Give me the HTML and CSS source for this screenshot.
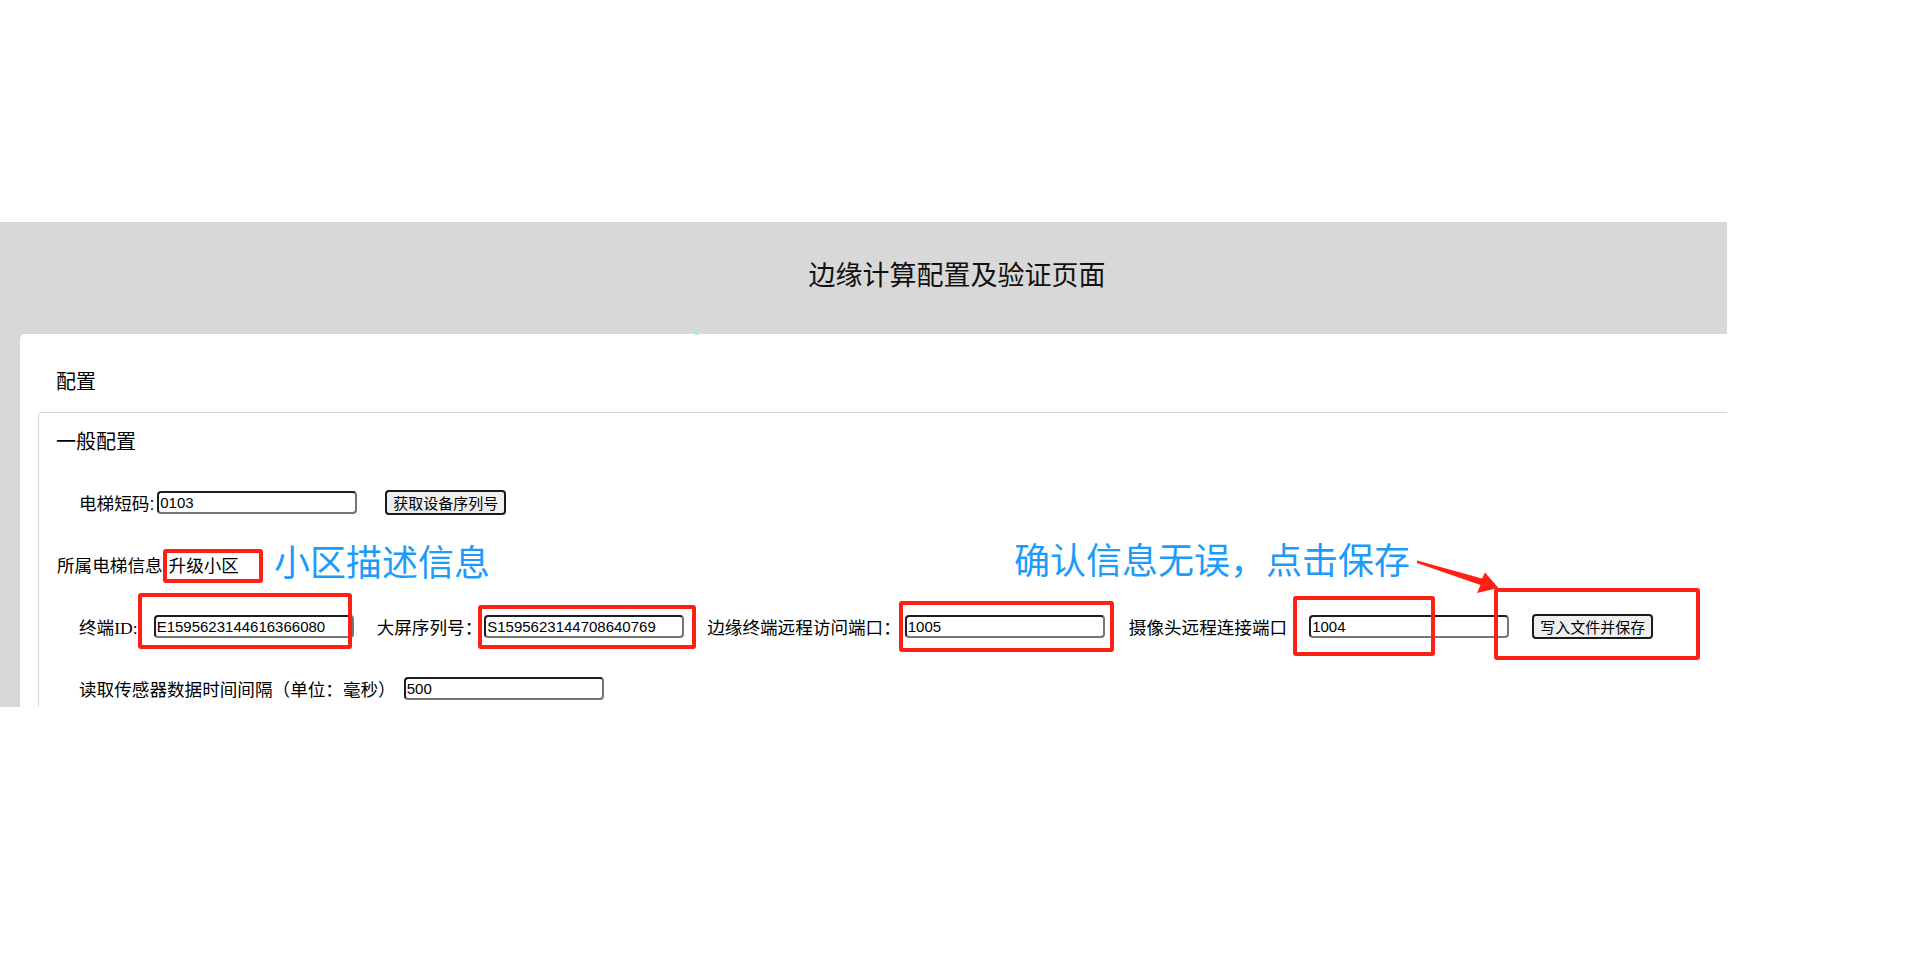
FILE: index.html
```html
<!DOCTYPE html>
<html lang="zh-CN">
<head>
    <meta charset="UTF-8">
    <title>边缘计算配置及验证页面</title>
    <link rel="stylesheet" href="styles.css">
</head>
<body>
    <div class="board">
        <div class="shot">
            <div class="page">
                <div class="top">边缘计算配置及验证页面</div>
                <div class="card">
                    <div class="card-title">配置</div>
                    <div class="group">
                        <div class="group-title">一般配置</div>
                        <div class="rows">
                            <div class="row">
                                <span class="label">电梯短码:</span>
                                <input class="field ml-3" type="text" value="0103">
                                <button class="btn ml-28" type="button">获取设备序列号</button>
                            </div>
                            <div class="row flush">
                                <span class="label">所属电梯信息</span>
                                <span class="value">升级小区</span>
                            </div>
                            <div class="row">
                                <span class="label">终端<span class="latin">ID:</span></span>
                                <input class="field ml-16" type="text" value="E1595623144616366080">
                                <span class="label ml-23">大屏序列号：</span>
                                <input class="field ml-2" type="text" value="S1595623144708640769">
                                <span class="label ml-23">边缘终端远程访问端口：</span>
                                <input class="field ml-4" type="text" value="1005">
                                <span class="label ml-24">摄像头远程连接端口</span>
                                <input class="field ml-22" type="text" value="1004">
                                <button class="btn ml-23" type="button">写入文件并保存</button>
                            </div>
                            <div class="row">
                                <span class="label">读取传感器数据时间间隔（单位：毫秒）</span>
                                <input class="field ml-8" type="text" value="500">
                            </div>
                        </div>
                    </div>
                </div>
            </div>
        </div>

        <!-- annotations drawn over the screenshot -->
        <div class="speck"></div>
        <div class="mark mark-a"></div>
        <div class="mark mark-b"></div>
        <div class="mark mark-c"></div>
        <div class="mark mark-d"></div>
        <div class="mark mark-e"></div>
        <div class="mark mark-f"></div>
        <div class="note note-a">小区描述信息</div>
        <div class="note note-b">确认信息无误，点击保存</div>
        <svg class="arrow" width="100" height="50" viewBox="1410 555 100 50">
            <polygon fill="#fe2015" points="1417,560.5 1482,578.5 1485,572.5 1498.5,588 1477,593 1480.5,585 1417,563"/>
        </svg>
    </div>
</body>
</html>
```

FILE: styles.css
```css
* {
    box-sizing: border-box;
}
body {
    margin: 0;
    background: #fff;
    color: #000;
    font-family: "Liberation Sans", "Noto Sans CJK SC", sans-serif;
}
.board {
    position: relative;
    width: 1920px;
    height: 976px;
    overflow: hidden;
}
.shot {
    margin-top: 222px;
    width: 1727px;
    height: 485px;
    overflow: hidden;
    background: #d8d8d8;
}
.page {
    width: 1914px;
}
.top {
    height: 112px;
    display: flex;
    align-items: center;
    justify-content: center;
    padding-bottom: 10px;
    font-family: "Noto Sans CJK SC", sans-serif;
    font-size: 27px;
    color: #111;
}
.card {
    margin-left: 20px;
    height: 420px;
    background: #fff;
    border-radius: 5px 5px 0 0;
    padding-top: 33px;
}
.card-title {
    padding-left: 36px;
    font-family: "Noto Sans CJK SC", sans-serif;
    font-size: 20px;
    line-height: 28px;
}
.group {
    margin: 17px 0 0 18px;
    height: 400px;
    border: 1px solid #d6d6d6;
    border-radius: 4px;
    padding: 14px 0 0 17px;
}
.group-title {
    font-family: "Noto Sans CJK SC", sans-serif;
    font-size: 20px;
    line-height: 28px;
}
.rows {
    margin-top: 16.5px;
}
.row {
    height: 62px;
    display: flex;
    align-items: center;
    padding-left: 23px;
    font-size: 17.6px;
    white-space: nowrap;
}
.row.flush {
    padding-left: 1px;
}
.latin {
    font-family: "Liberation Serif", serif;
}
.value {
    margin-left: 6px;
}
.field {
    width: 200px;
    height: 23px;
    margin: 0;
    padding: 0 1px;
    border: 2px solid;
    border-color: #1e1e1e #767676 #767676 #1e1e1e;
    border-radius: 4px;
    background: #fff;
    font-family: "Liberation Sans", sans-serif;
    font-size: 15px;
    color: #000;
}
.btn {
    height: 25px;
    margin: 0;
    padding: 0 6px;
    border: 2px solid #1a1a1a;
    border-radius: 4px;
    background: #efefef;
    font-family: "Noto Sans CJK SC", sans-serif;
    font-size: 15px;
    line-height: 19px;
    color: #000;
}
.ml-2 { margin-left: 2px; }
.ml-3 { margin-left: 3px; }
.ml-4 { margin-left: 4px; }
.ml-8 { margin-left: 8px; }
.ml-16 { margin-left: 16px; }
.ml-22 { margin-left: 22px; }
.ml-23 { margin-left: 23px; }
.ml-24 { margin-left: 24px; }
.ml-28 { margin-left: 28px; }

.speck {
    position: absolute;
    left: 695px;
    top: 332px;
    width: 3px;
    height: 3px;
    background: #7ff5ff;
}
.mark {
    position: absolute;
    border: 4px solid #fe2015;
    border-radius: 3px;
}
.mark-a { left: 163px; top: 549px; width: 100px; height: 34px; }
.mark-b { left: 138px; top: 593px; width: 214px; height: 56px; }
.mark-c { left: 478px; top: 605px; width: 218px; height: 44px; }
.mark-d { left: 899px; top: 601px; width: 215px; height: 51px; }
.mark-e { left: 1293px; top: 596px; width: 142px; height: 60px; }
.mark-f { left: 1494px; top: 588px; width: 206px; height: 72px; }
.note {
    position: absolute;
    color: #1c9bfb;
    font-family: "Noto Sans CJK SC", sans-serif;
    font-size: 36px;
    line-height: 36px;
    white-space: nowrap;
}
.note-a { left: 274px; top: 542px; }
.note-b { left: 1014px; top: 540px; }
.arrow {
    position: absolute;
    left: 1410px;
    top: 555px;
}
```
